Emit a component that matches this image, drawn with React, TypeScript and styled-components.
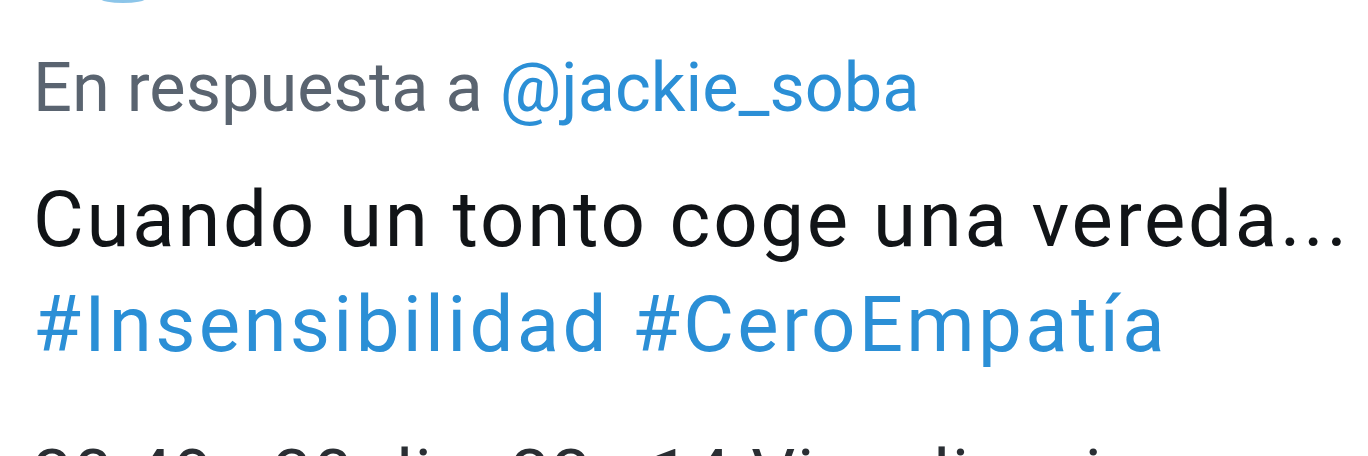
import React from "react";
import styled, { createGlobalStyle } from "styled-components";

const Global = createGlobalStyle`
  html, body { margin: 0; padding: 0; background: #ffffff; }
  body { width: 1368px; height: 456px; overflow: hidden; font-family: Roboto, "Noto Sans", sans-serif; }
`;

const Page = styled.div`
  width: 1368px;
  height: 456px;
  overflow: hidden;
  background: #ffffff;
  padding-left: 33px;
  box-sizing: border-box;
  display: flex;
  flex-direction: column;
`;

const TopEdge = styled.div`
  height: 0;
  display: flex;
  padding-left: 68px;
`;

const BadgeTail = styled.div`
  width: 44px;
  height: 8px;
  margin-top: -5px;
  border-radius: 50%;
  background: #6fb6e4;
  opacity: 0.8;
`;

const ReplyLine = styled.div`
  margin-top: 48px;
  font-size: 68.5px;
  line-height: 80px;
  color: #5a6470;
  white-space: nowrap;
`;

const Mention = styled.span`
  color: #2b8fd6;
`;

const Body = styled.div`
  margin-top: 39px;
  font-size: 78px;
  line-height: 105px;
  letter-spacing: 2.7px;
  color: #111417;
  white-space: nowrap;
`;

const Hashtag = styled.span`
  color: #2b8fd6;
  letter-spacing: 3.3px;
`;

const Meta = styled.div`
  margin-top: 58px;
  font-size: 69px;
  line-height: 80px;
  letter-spacing: 2px;
  color: #2a2e33;
  white-space: nowrap;
`;

export default function App() {
  return (
    <>
      <Global />
      <Page>
        <TopEdge>
          <BadgeTail />
        </TopEdge>
        <ReplyLine>
          En respuesta a <Mention>@jackie_soba</Mention>
        </ReplyLine>
        <Body>
          Cuando un tonto coge una vereda...
          <br />
          <Hashtag>#Insensibilidad</Hashtag> <Hashtag>#CeroEmpatía</Hashtag>
        </Body>
        <Meta>20:49 · 30 dic. 22 · 14 Visualizaciones</Meta>
      </Page>
    </>
  );
}
